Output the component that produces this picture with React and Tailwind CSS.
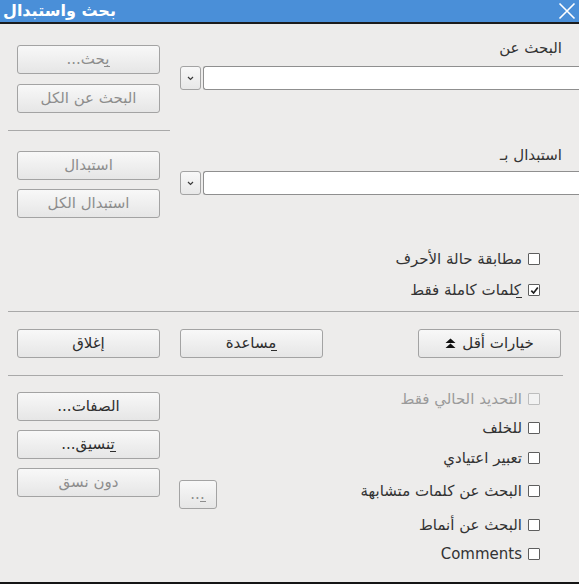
import React from 'react'

const FONT = "font-['DejaVu_Sans','Noto_Sans',sans-serif]"

// mnemonic marker: a short low line under the first letter of the label
const Mark = () => <span className="-ml-[5px] inline-block h-px w-[6px] bg-current align-[-3px]" />

const Btn = ({ children, disabled, className = '' }) => (
  <button
    type="button"
    className={`h-[29px] rounded-[3px] border border-[#a3a3a3] bg-gradient-to-b from-[#f8f8f8] to-[#e6e6e6] text-[15px] leading-none ${
      disabled ? 'text-[#8d8d8d]' : 'text-[#2e2e2e]'
    } ${className}`}
    dir="rtl"
  >
    {children}
  </button>
)

const Check = ({ checked, disabled }) => (
  <span
    className={`flex h-[12px] w-[12px] shrink-0 items-center justify-center rounded-[1px] border ${
      disabled ? 'border-[#bdbdbd] bg-[#f2f2f2]' : 'border-[#5e5e5e] bg-white'
    }`}
  >
    {checked && (
      <svg width="9" height="9" viewBox="0 0 9 9">
        <path d="M1.3 4.6 L3.6 7 L7.8 1.6" fill="none" stroke="#1e1e1e" strokeWidth="1.7" />
      </svg>
    )}
  </span>
)

const CheckRow = ({ label, checked, disabled, className = '' }) => (
  <div dir="rtl" className={`flex h-[20px] items-center gap-[6px] ${className}`}>
    <Check checked={checked} disabled={disabled} />
    <span className={`text-[15px] leading-none ${disabled ? 'text-[#9a9a9a]' : 'text-[#333]'}`}>{label}</span>
  </div>
)

const Combo = ({ className = '' }) => (
  <div className={`flex h-[24px] ${className}`}>
    <div className="flex w-[21px] items-center justify-center rounded-[3px] border border-[#a3a3a3] bg-gradient-to-b from-[#f8f8f8] to-[#e8e8e8]">
      <svg width="7" height="5" viewBox="0 0 7 5">
        <path d="M1 1 L3.5 3.5 L6 1" fill="none" stroke="#3a3a3a" strokeWidth="1.2" />
      </svg>
    </div>
    <div className="ml-[2px] flex-1 rounded-l-[3px] border border-r-0 border-[#8f8f8f] bg-white" />
  </div>
)

export default function App() {
  return (
    <div className={`${FONT} flex h-[584px] w-[579px] flex-col overflow-hidden border-b-2 border-[#151515] bg-[#edeceb]`}>
      {/* title bar */}
      <div className="flex h-[24px] shrink-0 items-center justify-between border-b-2 border-[#1c1c1c] bg-[#4a8fd8] pl-[3px] pr-[3px]">
        <span dir="rtl" className="text-[16px] font-bold leading-none text-white">بحث واستبدال</span>
        <svg width="18" height="18" viewBox="0 0 18 18">
          <path d="M1.5 1.5 L16.5 16.5 M16.5 1.5 L1.5 16.5" stroke="#fff" strokeWidth="1.6" />
        </svg>
      </div>

      {/* search / replace */}
      <div className="flex h-[287px] shrink-0">
        <div className="flex w-[170px] flex-col pl-[8px]">
          <Btn disabled className="ml-[9px] mt-[21px] w-[143px]">
            <Mark />بحث...
          </Btn>
          <Btn disabled className="ml-[9px] mt-[10px] w-[143px]">
            البحث عن الكل
          </Btn>
          <div className="mt-[17px] h-px bg-[#a9a9a9]" />
          <Btn disabled className="ml-[9px] mt-[20px] w-[143px]">
            استبدال
          </Btn>
          <Btn disabled className="ml-[9px] mt-[9px] w-[143px]">
            استبدال الكل
          </Btn>
        </div>
        <div className="flex flex-1 flex-col pl-[10px] pr-[17px]">
          <div dir="rtl" className="mt-[15px] h-[18px] text-[15px] leading-[18px] text-[#333]">
            البحث عن
          </div>
          <Combo className="mt-[9px] -mr-[17px]" />
          <div dir="rtl" className="mt-[56px] h-[18px] text-[15px] leading-[18px] text-[#333]">
            استبدال بـ
          </div>
          <Combo className="mt-[7px] -mr-[17px]" />
          <CheckRow className="mt-[54px] mr-[22px]" label="مطابقة حالة الأحرف" />
          <CheckRow className="mt-[11px] mr-[22px]" checked label={<><Mark />كلمات كاملة فقط</>} />
        </div>
      </div>

      <div className="ml-[8px] h-px shrink-0 bg-[#a9a9a9]" />

      {/* dialog buttons */}
      <div className="flex h-[46px] shrink-0 items-end pl-[17px] pr-[18px]">
        <Btn className="w-[143px]">إغلاق</Btn>
        <Btn className="ml-[20px] w-[143px]">
          <Mark />مساعدة
        </Btn>
        <Btn className="ml-auto w-[143px]">
          <span className="inline-flex items-center gap-[6px]">
            خيارات أقل
            <svg width="11" height="11" viewBox="0 0 11 11">
              <path d="M5.5 0.5 L10.5 5 L0.5 5 Z M5.5 5.5 L10.5 10 L0.5 10 Z" fill="#111" />
            </svg>
          </span>
        </Btn>
      </div>

      <div className="ml-[8px] mr-[16px] mt-[17px] h-px shrink-0 bg-[#a9a9a9]" />

      {/* more options */}
      <div className="flex flex-1">
        <div className="flex w-[170px] flex-col pl-[17px]">
          <Btn className="mt-[16px] w-[143px]">الصفات...</Btn>
          <Btn className="mt-[9px] w-[143px]">
            <Mark />تنسيق...
          </Btn>
          <Btn disabled className="mt-[9px] w-[143px]">
            دون نسق
          </Btn>
        </div>
        <div className="pl-[9px]">
          <Btn disabled className="mt-[104px] w-[38px]">
            <Mark />...
          </Btn>
        </div>
        <div className="flex flex-1 flex-col pr-[39px]">
          <CheckRow className="mt-[13px]" disabled label="التحديد الحالي فقط" />
          <CheckRow className="mt-[9px]" label="للخلف" />
          <CheckRow className="mt-[10px]" label="تعبير اعتيادي" />
          <CheckRow className="mt-[13px]" label="البحث عن كلمات متشابهة" />
          <CheckRow className="mt-[14px]" label="البحث عن أنماط" />
          <CheckRow className="mt-[9px]" label="Comments" />
        </div>
      </div>
    </div>
  )
}
